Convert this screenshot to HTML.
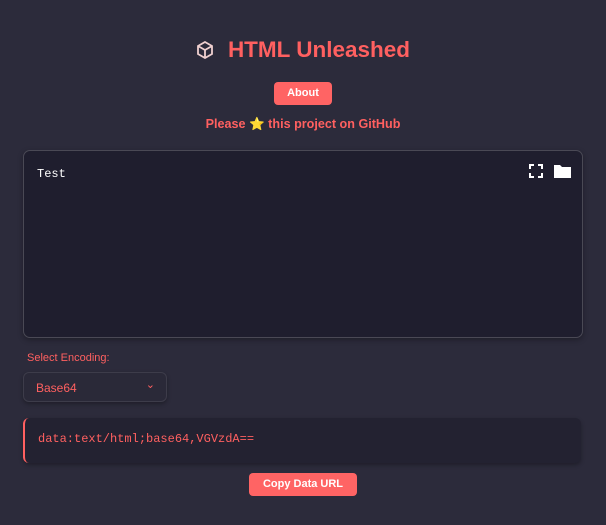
<!DOCTYPE html>
<html><head><style>
*{box-sizing:border-box;margin:0;padding:0}
body{width:606px;height:525px;background:#2c2b3b;font-family:"Liberation Sans",sans-serif;position:relative;overflow:hidden}
.title{position:absolute;top:37px;left:0;width:606px;text-align:center;color:#ff6060;font-weight:bold;font-size:22.5px}
.title svg{vertical-align:-2px;margin-right:14px}
.about{position:absolute;left:274px;top:82px;width:58px;height:23px;background:#ff6464;border-radius:4px;color:#fff;font-weight:bold;font-size:11px;text-align:center;line-height:23px}
.star{position:absolute;top:117px;width:606px;text-align:center;color:#ff6060;font-weight:bold;font-size:12.6px}
.ta{position:absolute;left:23px;top:150px;width:560px;height:188px;background:#1f1e2e;border:1px solid #4a4955;border-radius:7px;box-shadow:0 2px 6px rgba(0,0,0,.3)}
.ta .t{position:absolute;left:13px;top:16px;color:#fff;font-family:"Liberation Mono",monospace;font-size:12px}
.lbl{position:absolute;left:27px;top:352px;color:#ff6060;font-size:11px}
.sel{position:absolute;left:23px;top:372px;width:144px;height:30px;background:#2a2938;border:1px solid #3d3c4a;border-radius:6px;color:#ff6060;font-size:12px;padding:8px 0 0 12px;box-shadow:0 2px 4px rgba(0,0,0,.3)}
.sel span{position:absolute;right:11px;top:5px;font-size:11px}
.out{position:absolute;left:23px;top:418px;width:558px;height:45px;background:#232231;border-left:2px solid #ff6060;border-radius:6px;color:#ff6060;font-family:"Liberation Mono",monospace;font-size:12px;padding:14px 0 0 13px;box-shadow:0 2px 4px rgba(0,0,0,.3)}
.copy{position:absolute;left:249px;top:473px;width:108px;height:23px;background:#ff6464;border-radius:4px;color:#fff;font-weight:bold;font-size:11px;text-align:center;line-height:23px}
</style></head><body>
<div class="title"><svg width="18" height="18" viewBox="0 0 18 18"><path d="M9 1L16 5V13L9 17L2 13V5Z M2 5L9 9L16 5 M9 9V17" fill="none" stroke="#f0d0d0" stroke-width="1.8"/></svg>HTML Unleashed</div>
<div class="about">About</div>
<div class="star">Please <span style="color:#fc0">⭐</span> this project on GitHub</div>
<div class="ta"><div class="t">Test</div>
<svg style="position:absolute;left:505px;top:13px" width="14" height="14" viewBox="0 0 14 14"><path d="M1 5V1H5M9 1H13V5M13 9V13H9M5 13H1V9" fill="none" stroke="#fff" stroke-width="2"/></svg>
<svg style="position:absolute;left:530px;top:13px" width="17" height="14" viewBox="0 0 17 14"><path d="M0 1H6L8 3H17V14H0Z" fill="#fff"/></svg>
</div>
<div class="lbl">Select Encoding:</div>
<div class="sel">Base64<span>⌄</span></div>
<div class="out">data:text/html;base64,VGVzdA==</div>
<div class="copy">Copy Data URL</div>
</body></html>
